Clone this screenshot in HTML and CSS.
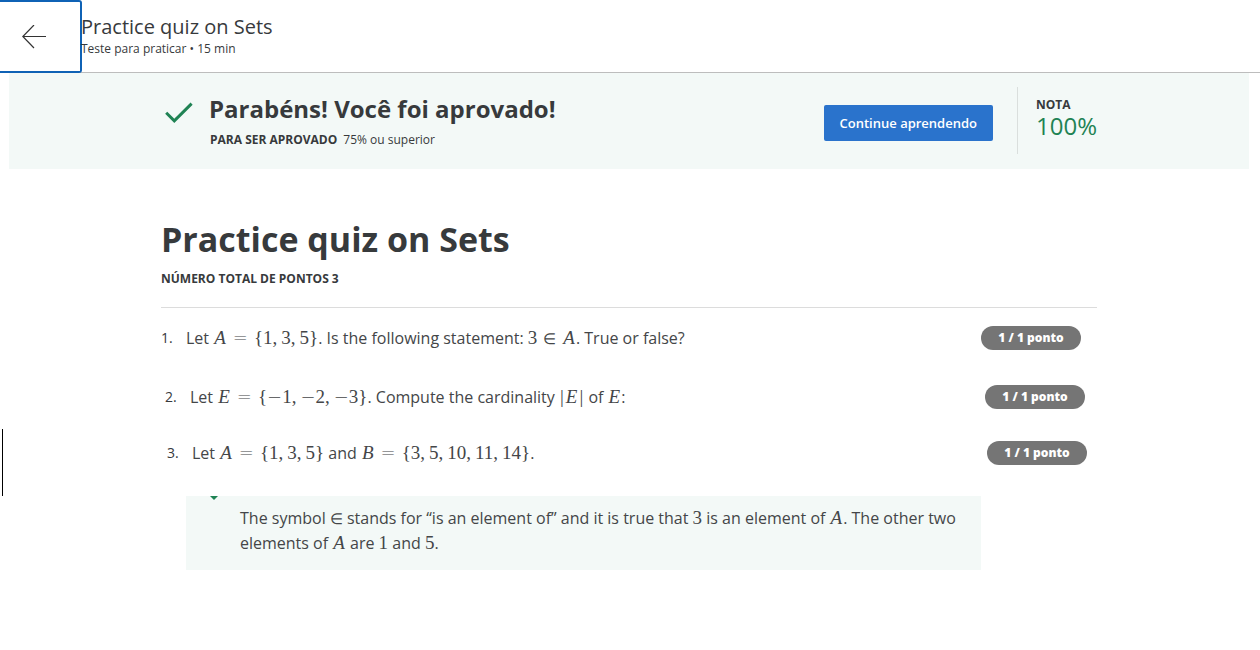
FILE: index.html
```html
<!DOCTYPE html>
<html lang="pt-BR">
<head>
<meta charset="utf-8">
<meta name="viewport" content="width=device-width, initial-scale=1">
<title>Practice quiz on Sets</title>
<link rel="stylesheet" href="styles.css">
</head>
<body>
<header class="topbar">
  <button class="back" type="button" aria-label="Voltar">
    <svg width="24" height="24" viewBox="0 0 24 24" fill="none" stroke="#333" stroke-width="1.2"><path d="M24 11.5H1M12 0L0.8 11.5L12 23"/></svg>
  </button>
  <div>
    <div class="topbar-title">Practice quiz on Sets</div>
    <div class="topbar-meta">Teste para praticar • 15 min</div>
  </div>
</header>
<main>
  <section class="banner">
    <div class="column banner-row">
      <svg class="check" width="28" height="22" viewBox="0 0 28 22" fill="none" stroke="#1f8354" stroke-width="3"><path d="M1.2 10.8L9.3 18.8L26.6 1.6"/></svg>
      <div class="result">
        <h2>Parabéns! Você foi aprovado!</h2>
        <p><strong>PARA SER APROVADO</strong><span>75% ou superior</span></p>
      </div>
      <button class="continue" type="button">Continue aprendendo</button>
      <div class="grade"><strong>NOTA</strong><span>100%</span></div>
    </div>
  </section>
  <section class="quiz">
    <div class="column">
      <h1>Practice quiz on Sets</h1>
      <p class="total">NÚMERO TOTAL DE PONTOS 3</p>
      <div class="question first">
        <span class="number">1.</span>
        <p>Let <span class="math"><i>A</i><span class="rel">=</span>{1<b>,</b>3<b>,</b>5}</span>. Is the following statement: <span class="math">3<span class="rel in">∈</span><i>A</i></span>. True or false?</p>
        <span class="points">1 / 1 ponto</span>
      </div>
      <div class="question second">
        <span class="number">2.</span>
        <p>Let <span class="math"><i>E</i><span class="rel">=</span>{<span class="op">−</span>1<b>,</b><span class="op">−</span>2<b>,</b><span class="op">−</span>3}</span>. Compute the cardinality <span class="math"><span class="bar">|</span><i>E</i><span class="bar">|</span></span> of <span class="math"><i>E</i></span>:</p>
        <span class="points">1 / 1 ponto</span>
      </div>
      <div class="question third">
        <span class="number">3.</span>
        <p>Let <span class="math"><i>A</i><span class="rel">=</span>{1<b>,</b>3<b>,</b>5}</span> and <span class="math"><i>B</i><span class="rel">=</span>{3<b>,</b>5<b>,</b>10<b>,</b>11<b>,</b>14}</span>.</p>
        <span class="points">1 / 1 ponto</span>
      </div>
      <div class="feedback">
        <svg width="8" height="4" viewBox="0 0 8 4" fill="#1f8354"><path d="M0 0H8L4 4Z"/></svg>
        <p>The symbol <span class="math"><span class="op sym">∈</span></span> stands for “is an element of” and it is true that <span class="math">3</span> is an element of <span class="math"><i>A</i></span>. The other two elements of <span class="math"><i>A</i></span> are <span class="math">1</span> and <span class="math">5</span>.</p>
      </div>
    </div>
    <div class="caret"></div>
  </section>
</main>
</body>
</html>
```
FILE: styles.css
```css
* { box-sizing: border-box; }
body {
  margin: 0;
  background: #fff;
  color: #373a3c;
  font: 16px/24px "Open Sans", sans-serif;
}
h1, h2, p { margin: 0; }
button { font-family: inherit; cursor: pointer; }

.topbar {
  display: flex;
  align-items: center;
  height: 73px;
  border-bottom: 1px solid #bdbdbd;
}
.back {
  display: flex;
  align-items: center;
  flex: none;
  width: 82px;
  height: 73px;
  margin-bottom: -1px;
  padding: 0 0 0 22px;
  background: #fff;
  border: 2px solid #0f62b5;
  border-left: 0;
  border-radius: 0 3px 3px 0;
}
.topbar-title { font-size: 20px; line-height: 26px; }
.topbar-meta { font-size: 12px; line-height: 18px; }
.topbar-title, .topbar-meta { margin-left: -1px; }

.column { width: 100%; max-width: 936px; margin: 0 auto; }

.banner {
  margin: 0 11px 0 9px;
  padding: 14px 0 15px;
  background: #f3f9f7;
}
.banner-row { display: flex; align-items: center; }
.check { flex: none; margin: 0 16px 16px 4px; }
.result { flex: 1; }
.result h2 { font-size: 24px; line-height: 32px; font-weight: 700; }
.result p {
  display: flex;
  gap: 6px;
  padding: 6px 0 0 1px;
  font-size: 12px;
  line-height: 18px;
}
.continue {
  height: 36px;
  margin-top: 5px;
  padding: 0 16px;
  border: 0;
  border-radius: 2px;
  background: #2a73cc;
  color: #fff;
  font-size: 13px;
  font-weight: 600;
}
.grade {
  display: flex;
  flex-direction: column;
  width: 80px;
  height: 67px;
  margin-left: 24px;
  padding: 9px 0 0 18px;
  border-left: 1px solid #dadfdd;
}
.grade strong { font-size: 12px; line-height: 18px; }
.grade span { color: #1f8354; font-size: 24px; line-height: 24px; }

.quiz { position: relative; padding: 46px 11px 80px 9px; }
.quiz h1 { font-size: 34px; line-height: 48px; font-weight: 700; }
.total {
  padding: 7px 0 19px;
  border-bottom: 1px solid #dcdcdc;
  font-size: 12px;
  line-height: 18px;
  font-weight: 700;
}
.question {
  display: grid;
  grid-template-columns: 25px 1fr 100px;
  align-items: center;
}
.question p, .feedback p { color: #444648; }
.first { padding: 18px 16px 0 0; }
.second { padding: 35px 12px 0 4px; }
.third { padding: 32px 10px 0 6px; }
.number { font-size: 14px; line-height: 22px; }
.points {
  height: 24px;
  border-radius: 12px;
  background: #757575;
  color: #fff;
  font-size: 12px;
  line-height: 24px;
  font-weight: 800;
  text-align: center;
}

.math {
  font-family: "Liberation Serif", serif;
  font-size: 19px;
  line-height: 20px;
  white-space: nowrap;
}
.math b { margin-right: 4px; font-weight: 400; }
.math i { padding: 0 1px; }
.rel, .op {
  font-family: "DejaVu Sans Light", "DejaVu Sans", sans-serif;
  font-size: 18px;
  line-height: 20px;
  font-weight: 200;
}
.rel { padding: 0 6px; }
.in, .sym { font-size: 15px; }
.bar { padding: 0 1px; }

.feedback {
  display: flex;
  align-items: flex-start;
  gap: 22px;
  margin: 31px 116px 0 25px;
  padding: 0 20px 14px 24px;
  background: #f3f9f7;
}
.feedback svg { flex: none; }
.feedback p { padding-top: 10px; line-height: 25px; }

.caret {
  position: absolute;
  top: 260px;
  left: 2px;
  width: 1px;
  height: 67px;
  background: #000;
}
```
